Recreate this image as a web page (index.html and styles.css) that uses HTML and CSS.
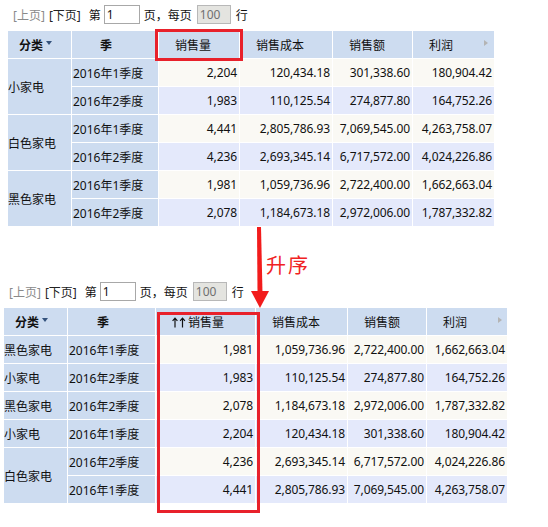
FILE: index.html
```html
<!DOCTYPE html>
<html lang="zh-CN">
<head>
<meta charset="utf-8">
<title>销售量排序</title>
<link rel="stylesheet" href="styles.css">
</head>
<body>
<div class="page">
  <section class="panel panel-top">
    <div class="pager">
      <span class="pg-link is-disabled">[上页]</span>
      <span class="pg-link pg-next">[下页]</span>
      <span class="pg-text pg-first">第</span>
      <input class="pg-input pg-num" type="text" value="1">
      <span class="pg-text pg-mid">页，每页</span>
      <input class="pg-input pg-size" type="text" value="100" readonly>
      <span class="pg-text pg-last">行</span>
    </div>
    <table class="grid grid-top">
      <thead>
        <tr>
          <th class="h-dim h-cat w-cat">分类<span class="sort-caret"></span></th>
          <th class="h-dim h-q w-q">季</th>
          <th class="h-msr w-vol">销售量</th>
          <th class="h-msr w-cost">销售成本</th>
          <th class="h-msr w-amt">销售额</th>
          <th class="h-msr w-profit">利润<span class="more-caret"></span></th>
        </tr>
      </thead>
      <tbody>
        <tr class="odd"><td class="c-cat" rowspan="2">小家电</td><td class="c-q">2016年1季度</td><td class="c-num">2,204</td><td class="c-num">120,434.18</td><td class="c-num">301,338.60</td><td class="c-num">180,904.42</td></tr>
        <tr class="even"><td class="c-q">2016年2季度</td><td class="c-num">1,983</td><td class="c-num">110,125.54</td><td class="c-num">274,877.80</td><td class="c-num">164,752.26</td></tr>
        <tr class="odd"><td class="c-cat" rowspan="2">白色家电</td><td class="c-q">2016年1季度</td><td class="c-num">4,441</td><td class="c-num">2,805,786.93</td><td class="c-num">7,069,545.00</td><td class="c-num">4,263,758.07</td></tr>
        <tr class="even"><td class="c-q">2016年2季度</td><td class="c-num">4,236</td><td class="c-num">2,693,345.14</td><td class="c-num">6,717,572.00</td><td class="c-num">4,024,226.86</td></tr>
        <tr class="odd"><td class="c-cat" rowspan="2">黑色家电</td><td class="c-q">2016年1季度</td><td class="c-num">1,981</td><td class="c-num">1,059,736.96</td><td class="c-num">2,722,400.00</td><td class="c-num">1,662,663.04</td></tr>
        <tr class="even"><td class="c-q">2016年2季度</td><td class="c-num">2,078</td><td class="c-num">1,184,673.18</td><td class="c-num">2,972,006.00</td><td class="c-num">1,787,332.82</td></tr>
      </tbody>
    </table>
  </section>

  <section class="panel panel-bottom">
    <div class="pager">
      <span class="pg-link is-disabled">[上页]</span>
      <span class="pg-link pg-next">[下页]</span>
      <span class="pg-text pg-first">第</span>
      <input class="pg-input pg-num" type="text" value="1">
      <span class="pg-text pg-mid">页，每页</span>
      <input class="pg-input pg-size" type="text" value="100" readonly>
      <span class="pg-text pg-last">行</span>
    </div>
    <table class="grid grid-bottom">
      <thead>
        <tr>
          <th class="h-dim h-cat w-cat">分类<span class="sort-caret"></span></th>
          <th class="h-dim h-q w-q">季</th>
          <th class="h-msr h-sorted w-vol"><svg class="asc-icon" width="14" height="11" viewBox="0 0 14 11"><path d="M3 10.5V1.2M0.6 3.8L3 1.2L5.4 3.8M10.5 10.5V1.2M8.1 3.8L10.5 1.2L12.9 3.8" fill="none" stroke="#111" stroke-width="1.2"/></svg>销售量</th>
          <th class="h-msr w-cost">销售成本</th>
          <th class="h-msr w-amt">销售额</th>
          <th class="h-msr w-profit">利润<span class="more-caret"></span></th>
        </tr>
      </thead>
      <tbody>
        <tr class="odd"><td class="c-cat">黑色家电</td><td class="c-q">2016年1季度</td><td class="c-num">1,981</td><td class="c-num">1,059,736.96</td><td class="c-num">2,722,400.00</td><td class="c-num">1,662,663.04</td></tr>
        <tr class="even"><td class="c-cat">小家电</td><td class="c-q">2016年2季度</td><td class="c-num">1,983</td><td class="c-num">110,125.54</td><td class="c-num">274,877.80</td><td class="c-num">164,752.26</td></tr>
        <tr class="odd"><td class="c-cat">黑色家电</td><td class="c-q">2016年2季度</td><td class="c-num">2,078</td><td class="c-num">1,184,673.18</td><td class="c-num">2,972,006.00</td><td class="c-num">1,787,332.82</td></tr>
        <tr class="even"><td class="c-cat">小家电</td><td class="c-q">2016年1季度</td><td class="c-num">2,204</td><td class="c-num">120,434.18</td><td class="c-num">301,338.60</td><td class="c-num">180,904.42</td></tr>
        <tr class="odd"><td class="c-cat" rowspan="2">白色家电</td><td class="c-q">2016年2季度</td><td class="c-num">4,236</td><td class="c-num">2,693,345.14</td><td class="c-num">6,717,572.00</td><td class="c-num">4,024,226.86</td></tr>
        <tr class="even"><td class="c-q">2016年1季度</td><td class="c-num">4,441</td><td class="c-num">2,805,786.93</td><td class="c-num">7,069,545.00</td><td class="c-num">4,263,758.07</td></tr>
      </tbody>
    </table>
  </section>

  <div class="mark mark-head"></div>
  <svg class="flow-arrow" width="22" height="86" viewBox="0 0 22 86">
    <polygon points="8,2 12,2 13.5,68 8.5,68" fill="#f21c1c"/>
    <polygon points="2,66 20,66 11,83" fill="#f21c1c"/>
  </svg>
  <div class="flow-label">升序</div>
  <div class="mark mark-col"></div>
</div>
</body>
</html>
```

FILE: styles.css
```css
html, body {
  margin: 0;
  padding: 0;
  background: #fff;
}

body {
  font-family: "Noto Sans", "Noto Sans CJK SC", sans-serif;
  font-size: 12px;
  color: #111;
}

.page {
  position: relative;
  width: 548px;
  height: 527px;
  overflow: hidden;
}

.panel-top {
  padding: 5px 0 0 8px;
}

.panel-bottom {
  padding: 5px 0 0 4px;
  margin-top: 50px;
}

/* pager */
.pager {
  display: flex;
  align-items: center;
  height: 19px;
  padding-left: 5px;
  margin-bottom: 7px;
  white-space: nowrap;
}

.pg-link {
  color: #222;
}

.pg-link.is-disabled {
  color: #8a8a8a;
}

.pg-next {
  margin-left: 4px;
}

.pg-first {
  margin-left: 8px;
}

.pg-input {
  box-sizing: border-box;
  height: 19px;
  margin: 0;
  padding: 0 2px;
  border: 1px solid #a8a8a8;
  background: #fff;
  font-family: "Noto Sans", "Noto Sans CJK SC", sans-serif;
  font-size: 12px;
  color: #111;
  outline: none;
}

.pg-num {
  width: 36px;
  margin-left: 3px;
}

.pg-mid {
  margin-left: 4px;
}

.pg-size {
  width: 34px;
  margin-left: 5px;
  background: #e4e4e0;
  color: #707070;
  border-color: #b8b8b8;
}

.pg-last {
  margin-left: 5px;
}

/* grid */
.grid {
  border-collapse: separate;
  border-spacing: 0;
  table-layout: fixed;
}

.grid-top {
  width: 487px;
}

.grid-bottom {
  width: 504px;
}

.grid th,
.grid td {
  box-sizing: border-box;
  padding: 0;
  border-right: 1px solid #fff;
  border-bottom: 1px solid #fff;
  white-space: nowrap;
  overflow: hidden;
}

.grid tr {
  height: 28px;
}

.grid th {
  background: #cddcf0;
  font-weight: normal;
  text-align: left;
  color: #111;
}

.grid th.h-dim {
  font-weight: bold;
}

.grid th.h-cat {
  padding-left: 11px;
}

.grid th.h-q {
  padding-left: 28px;
}

.grid th.h-msr {
  padding-left: 16px;
}

.grid th.h-sorted {
  padding-left: 16px;
}

.grid-bottom th.h-q {
  padding-left: 29px;
}

.asc-icon {
  display: inline-block;
  vertical-align: -1px;
  margin-right: 2px;
}

.sort-caret {
  display: inline-block;
  width: 0;
  height: 0;
  margin-left: 3px;
  vertical-align: 5px;
  border-left: 3.5px solid transparent;
  border-right: 3.5px solid transparent;
  border-top: 4px solid #34527c;
}

.more-caret {
  float: right;
  width: 0;
  height: 0;
  margin-top: 4px;
  margin-right: 6px;
  border-top: 3px solid transparent;
  border-bottom: 3px solid transparent;
  border-left: 4px solid #b4b4b4;
}

.grid-bottom .more-caret {
  margin-right: 5px;
}

.grid-top .w-cat { width: 64px; }
.grid-top .w-q { width: 87px; }
.grid-top .w-vol { width: 81px; }
.grid-top .w-cost { width: 93px; }
.grid-top .w-amt { width: 80px; }
.grid-top .w-profit { width: 82px; }

.grid-bottom .w-cat { width: 64px; }
.grid-bottom .w-q { width: 88px; }
.grid-bottom .w-vol { width: 100px; }
.grid-bottom .w-cost { width: 92px; }
.grid-bottom .w-amt { width: 79px; }
.grid-bottom .w-profit { width: 81px; }

.grid td.c-cat,
.grid td.c-q {
  background: #cddcf0;
  text-align: left;
}

.grid td.c-q {
  padding-left: 1px;
}

.grid td.c-num {
  text-align: right;
  padding-right: 2px;
  letter-spacing: -0.1px;
}

.grid .odd td.c-num {
  background: #faf9f4;
}

.grid .even td.c-num {
  background: #e4e9fb;
}

/* overlays */
.mark {
  position: absolute;
  box-sizing: border-box;
  border: 3px solid #e8212b;
}

.mark-head {
  left: 155px;
  top: 29px;
  width: 88px;
  height: 32px;
}

.mark-col {
  left: 157px;
  top: 312px;
  width: 103px;
  height: 201px;
}

.flow-arrow {
  position: absolute;
  left: 249px;
  top: 225px;
}

.flow-label {
  position: absolute;
  left: 266px;
  top: 255px;
  font-family: "Noto Sans CJK SC", sans-serif;
  font-size: 20px;
  line-height: 20px;
  letter-spacing: 2px;
  color: #f02222;
}
```
